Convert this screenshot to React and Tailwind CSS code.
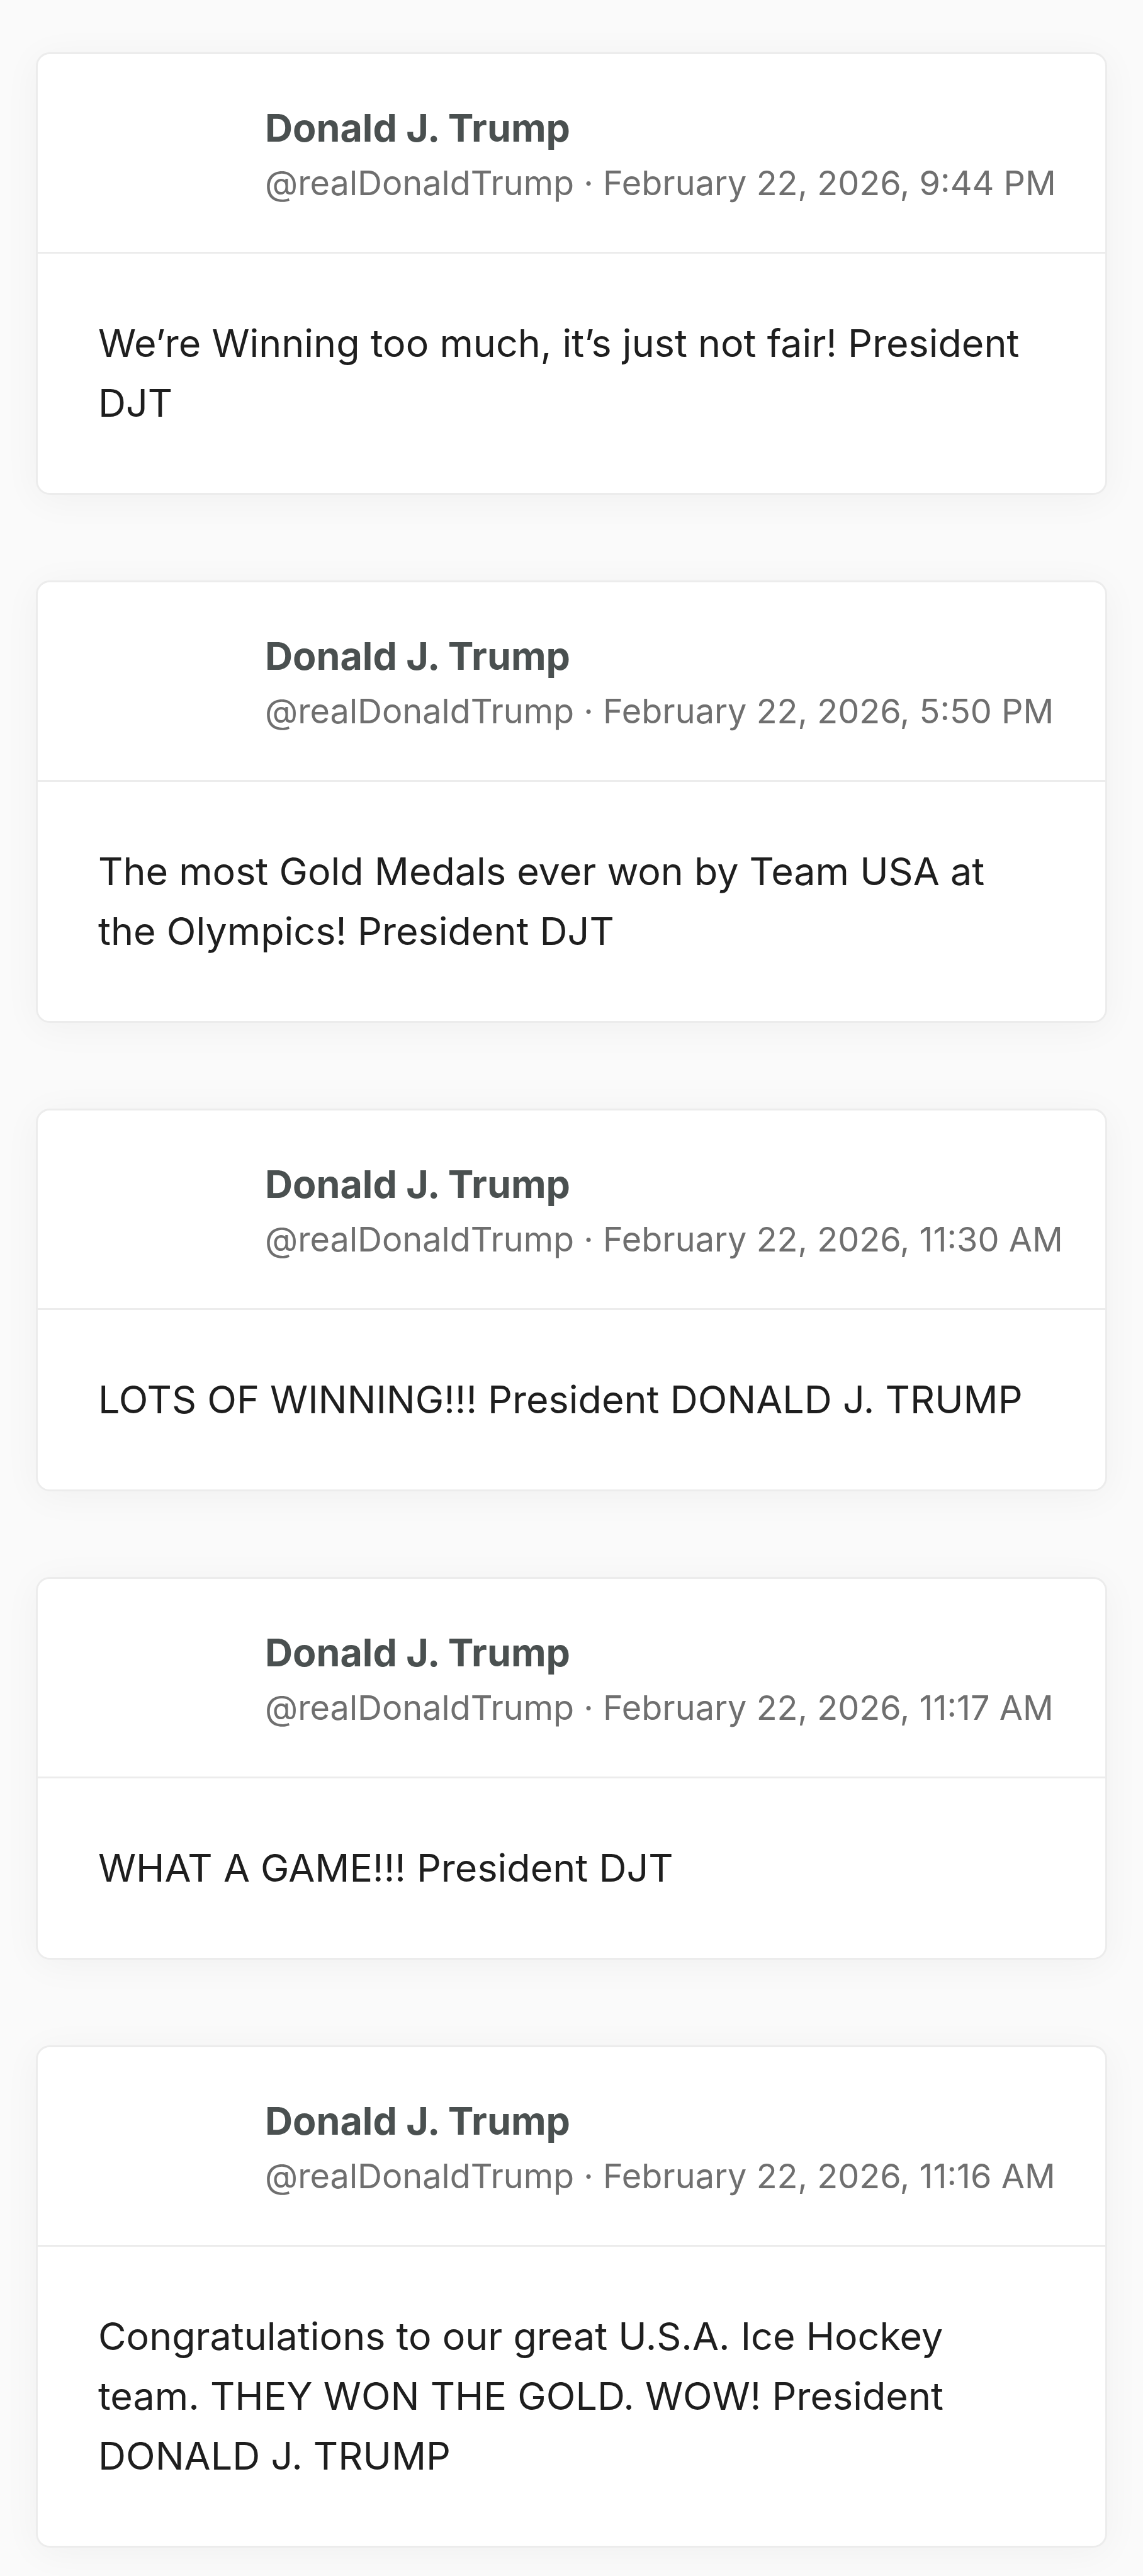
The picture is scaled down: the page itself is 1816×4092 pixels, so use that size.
import React from "react";

const posts = [
  {
    date: "February 22, 2026, 9:44 PM",
    text: "We’re Winning too much, it’s just not fair! President DJT",
  },
  {
    date: "February 22, 2026, 5:50 PM",
    text: "The most Gold Medals ever won by Team USA at the Olympics! President DJT",
  },
  {
    date: "February 22, 2026, 11:30 AM",
    text: "LOTS OF WINNING!!! President DONALD J. TRUMP",
  },
  {
    date: "February 22, 2026, 11:17 AM",
    text: "WHAT A GAME!!! President DJT",
  },
  {
    date: "February 22, 2026, 11:16 AM",
    text: "Congratulations to our great U.S.A. Ice Hockey team. THEY WON THE GOLD. WOW! President DONALD J. TRUMP",
  },
];

function Post({ date, text }) {
  return (
    <div className="bg-white border-[3px] border-[#ececec] rounded-[22px] shadow-[0_8px_60px_rgba(0,0,0,0.045)] overflow-hidden">
      <div className="h-[317px] flex items-center pt-[8px] pl-[361px] pr-[20px] border-b-[3px] border-[#ececec]">
        <div className="flex flex-col gap-[18px]">
          <div className="text-[61px] leading-[70px] font-bold text-[#4a5050] whitespace-nowrap">
            Donald J. Trump
          </div>
          <div className="text-[54px] leading-[70px] text-[#6f6f6f] whitespace-nowrap">
            @realDonaldTrump · {date}
          </div>
        </div>
      </div>
      <div className="px-[96px] pt-[95px] pb-[95px] text-[61px] leading-[95px] text-[#1e1e1e]">
        {text}
      </div>
    </div>
  );
}

export default function App() {
  return (
    <div
      className="min-h-screen bg-[#fafafa] pt-[83px] pb-[45px] px-[57px] flex flex-col gap-[136px]"
      style={{ fontFamily: "Inter, 'Noto Sans', sans-serif" }}
    >
      {posts.map((p, i) => (
        <Post key={i} {...p} />
      ))}
    </div>
  );
}
